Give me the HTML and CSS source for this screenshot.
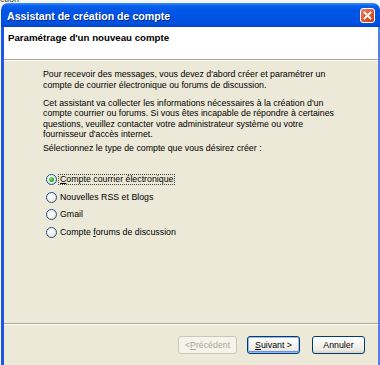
FILE: index.html
```html
<!DOCTYPE html>
<html lang="fr">
<head>
<meta charset="utf-8">
<title>Assistant de création de compte</title>
<link rel="stylesheet" href="styles.css">
</head>
<body>
<div class="strip"><span>ction</span></div>
<div class="window">
  <div class="titlebar">
    <span class="title">Assistant de création de compte</span>
    <span class="close">
      <svg width="15" height="15" viewBox="0 0 15 15">
        <defs>
          <linearGradient id="cg" x1="0" y1="0" x2="1" y2="1">
            <stop offset="0" stop-color="#f08a63"/>
            <stop offset="0.5" stop-color="#e0592f"/>
            <stop offset="1" stop-color="#c23b12"/>
          </linearGradient>
        </defs>
        <rect x="0.5" y="0.5" width="14" height="14" rx="2.5" fill="url(#cg)" stroke="#fff" stroke-width="1"/>
        <path d="M4.5 4.5 L10.5 10.5 M10.5 4.5 L4.5 10.5" stroke="#fff" stroke-width="1.8" stroke-linecap="square"/>
      </svg>
    </span>
  </div>
  <div class="frame">
    <div class="header">Paramétrage d'un nouveau compte</div>
    <div class="content">
      <p class="p1">Pour recevoir des messages, vous devez d'abord créer et paramétrer un<br>compte de courrier électronique ou forums de discussion.</p>
      <p class="p2">Cet assistant va collecter les informations nécessaires à la création d'un<br>compte courrier ou forums. Si vous êtes incapable de répondre à certaines<br>questions, veuillez contacter votre administrateur système ou votre<br>fournisseur d'accès internet.</p>
      <p class="p3">Sélectionnez le type de compte que vous désirez créer :</p>
      <ul class="options">
        <li><span class="radio checked"></span><span class="label focus"><u>C</u>ompte courrier électronique</span></li>
        <li><span class="radio"></span><span class="label">Nouvelles RSS et Blogs</span></li>
        <li><span class="radio"></span><span class="label">Gmail</span></li>
        <li><span class="radio"></span><span class="label">Compte <u>f</u>orums de discussion</span></li>
      </ul>
    </div>
    <div class="footer">
      <span class="btn btn-prev disabled">&lt; <u>P</u>récédent</span>
      <span class="btn btn-next default"><u>S</u>uivant &gt;</span>
      <span class="btn btn-cancel">Annuler</span>
    </div>
  </div>
</div>
</body>
</html>
```
FILE: styles.css
```css
html, body {
  margin: 0;
  padding: 0;
}
body {
  width: 380px;
  height: 365px;
  overflow: hidden;
  background: #f6f6f6;
  font-family: "Liberation Sans", Arial, sans-serif;
}
.strip {
  height: 3px;
  overflow: hidden;
  font-size: 9px;
  color: #333;
}
.strip span {
  display: block;
  margin-top: -5px;
  line-height: 8px;
}
.window {
  margin-left: 1px;
  width: 379px;
  height: 362px;
  display: flex;
  flex-direction: column;
}
.titlebar {
  height: 24px;
  flex: none;
  box-sizing: border-box;
  display: flex;
  align-items: center;
  justify-content: space-between;
  padding: 0 5px 0 6px;
  border-radius: 7px 7px 0 0;
  background: linear-gradient(#3b8cff 0, #0a62ee 12%, #0055e5 30%, #0053e1 70%, #0050dc 88%, #0042cc 100%);
}
.title {
  color: #fff;
  font-weight: bold;
  font-size: 10.6px;
  text-shadow: 1px 1px 0 #0a2a8c;
  padding-top: 1px;
}
.close {
  display: flex;
  width: 15px;
  height: 15px;
  margin-top: 1px;
}
.frame {
  flex: 1;
  display: flex;
  flex-direction: column;
  border-left: 3px solid #1d55e9;
  border-right: 2px solid #5b7fe0;
  background: #ece9d8;
}
.header {
  height: 33px;
  flex: none;
  box-sizing: border-box;
  background: #fff;
  padding: 5px 0 0 4px;
  font-size: 9.7px;
  line-height: 12px;
  font-weight: bold;
  color: #000;
  border-bottom: 1px solid #aca899;
  box-shadow: 0 1px 0 #fff;
}
.content {
  height: 264px;
  flex: none;
  box-sizing: border-box;
  padding: 9px 0 0 39px;
  font-size: 8.8px;
  line-height: 10.5px;
  color: #000;
  border-bottom: 1px solid #aca899;
  white-space: nowrap;
}
.content p {
  margin: 0;
}
.p1 { margin-bottom: 7.7px !important; }
.p2 { margin-bottom: 3.1px !important; }
.options {
  list-style: none;
  margin: 17.6px 0 0 3px;
  padding: 0;
}
.options li {
  height: 17.6px;
  display: flex;
  align-items: center;
}
.radio {
  width: 11px;
  height: 11px;
  box-sizing: border-box;
  border: 1px solid #1c5180;
  border-radius: 50%;
  background: radial-gradient(circle at 35% 35%, #ffffff 0, #f4f3ef 45%, #d9d6cb 100%);
  display: flex;
  align-items: center;
  justify-content: center;
  flex: none;
}
.radio.checked::after {
  content: "";
  width: 5px;
  height: 5px;
  border-radius: 50%;
  background: radial-gradient(circle at 35% 35%, #7be77a 0, #2fb42d 55%, #1b8f1a 100%);
}
.label {
  margin-left: 1px;
  padding: 0 1px;
  line-height: 9px;
  border: 1px dotted transparent;
}
.label.focus {
  border-color: #444;
}
.footer {
  flex: 1;
  border-top: 1px solid #fff;
  display: flex;
  justify-content: flex-end;
  align-items: flex-start;
  padding: 11px 13px 0 0;
}
.btn {
  height: 18px;
  box-sizing: border-box;
  display: flex;
  align-items: center;
  justify-content: center;
  border: 1px solid #003c74;
  border-radius: 3px;
  background: linear-gradient(#ffffff 0, #f7f6f2 40%, #ecebe5 80%, #d8d3c6 100%);
  font-size: 8.8px;
  color: #000;
}
.btn-prev { width: 59px; }
.btn-next { width: 53px; margin-left: 10px; }
.btn-cancel { width: 53px; margin-left: 12px; }
.btn.disabled {
  border-color: #c9c7ba;
  background: #f5f4ea;
  color: #aca899;
}
.btn.default {
  box-shadow: inset 0 0 0 1px #9db9eb, inset 0 -1px 0 1px #6f8fe0;
}
```
